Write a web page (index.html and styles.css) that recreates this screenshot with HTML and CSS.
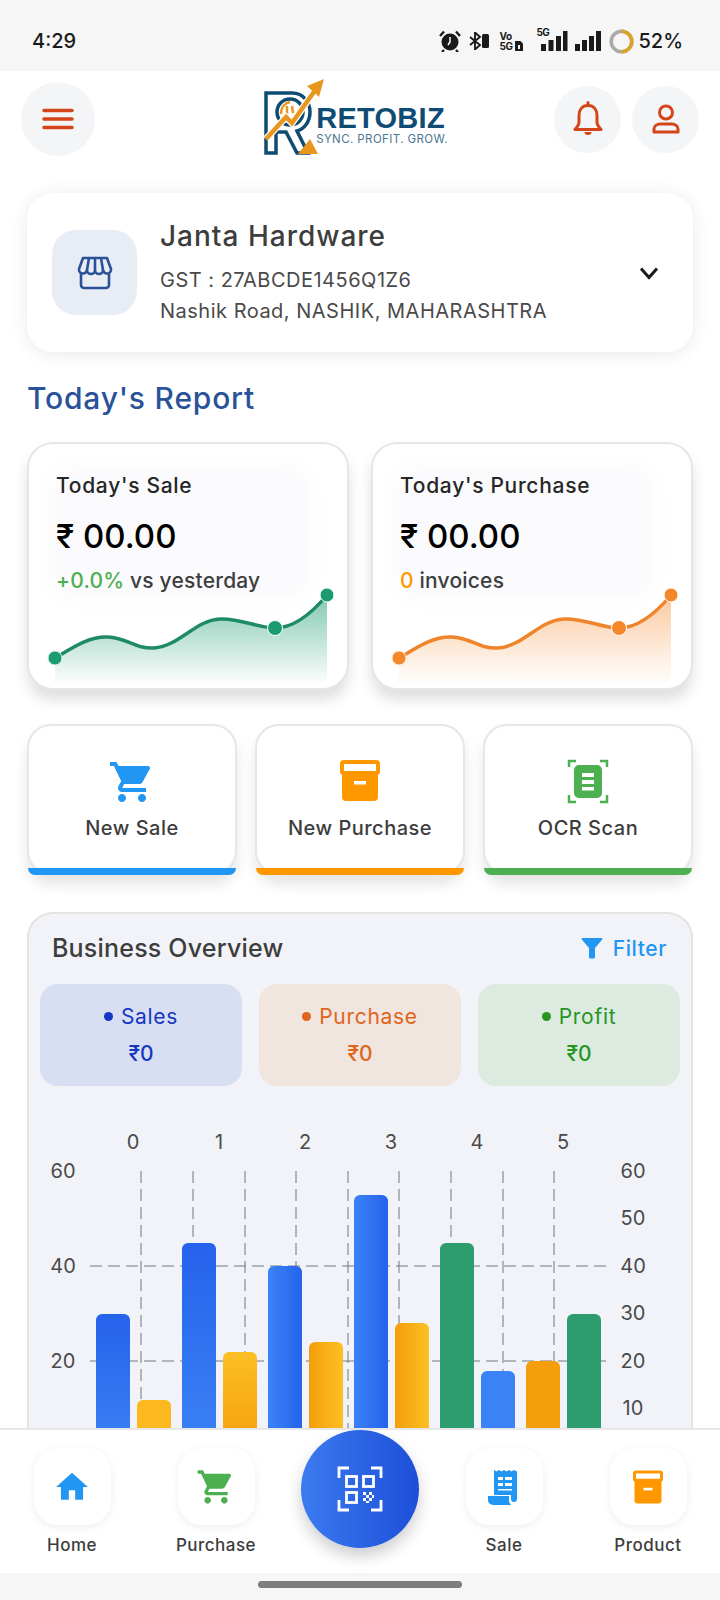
FILE: index.html
```html
<!DOCTYPE html>
<html>
<head>
    <meta charset="utf-8">
    <meta name="viewport" content="width=device-width, initial-scale=1">
    <title>Retobiz</title>
    <link rel="stylesheet" href="styles.css">
</head>
<body>
    <div class="app">
        <div class="status-bar">
            <span class="time">4:29</span>
            <div class="status-icons">
                <svg class="st-alarm" width="22" height="22" viewBox="0 0 22 22"><circle cx="11" cy="12" r="8.5" fill="#1a1a1a"/><path d="M1 6l4-4.5M21 6l-4-4.5M5 20l-2 2M17 20l2 2" stroke="#1a1a1a" stroke-width="2.4" fill="none"/><path d="M11 7v5l-2 3" stroke="#f6f6f6" stroke-width="1.5" fill="none"/></svg>
                <svg class="st-bt" width="21" height="18" viewBox="0 0 21 18"><path d="M1 5l10 8-5 4.500V.5l5 4.500-10 8" stroke="#1a1a1a" stroke-width="1.900" fill="none"/><rect x="13" y="2" width="7" height="14" rx="1.500" fill="#1a1a1a"/></svg>
                <div class="st-vo"><span>Vo</span><span>5G</span></div>
                <svg class="st-sim" width="8" height="10" viewBox="0 0 8 10"><path d="M0 0h5.500L8 2.500V10H0z" fill="#1a1a1a"/><rect x="3" y="4" width="2" height="4" fill="#f6f6f6"/></svg>
                <div class="st-signal">
                    <span class="st-5g">5G</span>
                    <svg width="27" height="20" viewBox="0 0 27 20"><path d="M0 13h5v7H0zM7.500 9h5v11h-5zM15 5h5v15h-5z" fill="#1a1a1a"/><rect x="22" y="0" width="4.500" height="20" fill="#1a1a1a"/></svg>
                </div>
                <svg class="st-bars" width="26" height="20" viewBox="0 0 26 20"><path d="M0 13h5v7H0zM7 9h5v11H7zM14 5h5v15h-5zM21 0h5v20h-5z" fill="#1a1a1a"/></svg>
                <svg class="st-ring" width="25" height="25" viewBox="0 0 25 25"><circle cx="12.500" cy="12.500" r="10.300" fill="none" stroke="#a9a9a9" stroke-width="3.500"/><path d="M12.500 2.200a10.300 10.300 0 0 1 0 20.600" fill="none" stroke="#dca326" stroke-width="3.500"/></svg>
                <span class="battery">52%</span>
            </div>
        </div>

        <div class="top-bar">
            <button class="round-btn menu-btn">
                <svg width="32" height="24" viewBox="0 0 32 24"><path d="M2 3.500h28M2 12h28M2 20.500h28" stroke="#d4451a" stroke-width="3.500" stroke-linecap="round"/></svg>
            </button>
            <div class="logo">
                <svg width="62" height="76" viewBox="0 0 62 76">
                    <path d="M2 14H28C40 14 46 24 46 33C46 43 40 50 33 52L44 74H33L22 53H12V74H2z" fill="none" stroke="#0f4c75" stroke-width="3.500"/>
                    <circle cx="26" cy="33" r="13" fill="#fff" stroke="#0f4c75" stroke-width="3.500"/>
                    <path d="M17 35C17 28 21 24 26 23M23 36V27M29 34l-1-7" stroke="#e8961e" stroke-width="2.500" fill="none"/>
                    <path d="M2 60L22 38l6 6L52 10" stroke="#fff" stroke-width="7" fill="none"/>
                    <path d="M2 60L22 38l6 6L52 10" stroke="#e8961e" stroke-width="4.500" fill="none"/>
                    <path d="M60 0L43 7l12 11z" fill="#e8961e"/>
                    <path d="M34 75L46 60l8 15z" fill="#e8961e"/>
                </svg>
                <div class="logo-text">
                    <div class="logo-name">RETOBIZ</div>
                    <div class="logo-tag">SYNC. PROFIT. GROW.</div>
                </div>
            </div>
            <div class="top-right">
                <button class="round-btn small">
                    <svg width="30" height="36" viewBox="0 0 30 36"><path d="M15 4.500c-6 0-9 4.500-9 10v7c0 2.500-2 4.500-4 7h26c-2-2.500-4-4.500-4-7v-7c0-5.500-3-10-9-10z" fill="none" stroke="#d4451a" stroke-width="3" stroke-linejoin="round"/><path d="M15 1.500v3" stroke="#d4451a" stroke-width="3" stroke-linecap="round"/><path d="M11.500 31h7a3.500 3 0 0 1-7 0z" fill="#d4451a"/></svg>
                </button>
                <button class="round-btn small">
                    <svg width="30" height="30" viewBox="0 0 30 30"><circle cx="15" cy="8.500" r="6.500" fill="none" stroke="#d4451a" stroke-width="3"/><path d="M3 28v-3c0-3 3-5 6-5h12c3 0 6 2 6 5v3z" fill="none" stroke="#d4451a" stroke-width="3" stroke-linejoin="round"/></svg>
                </button>
            </div>
        </div>

        <div class="main">
            <div class="shop-card">
                <div class="shop-icon">
                    <svg width="36" height="34" viewBox="0 0 36 34" fill="none" stroke="#2a5298" stroke-width="2.600" stroke-linejoin="round"><path d="M6 2h24l4 11a4 4 0 0 1-8 1 4 4 0 0 1-8 0 4 4 0 0 1-8 0 4 4 0 0 1-8-1z"/><path d="M12 2l-2 12M18 2v12M24 2l2 12"/><path d="M4 17v12a3 3 0 0 0 3 3h22a3 3 0 0 0 3-3V17"/></svg>
                </div>
                <div class="shop-info">
                    <div class="shop-name">Janta Hardware</div>
                    <div class="shop-line">GST : 27ABCDE1456Q1Z6</div>
                    <div class="shop-line">Nashik Road, NASHIK, MAHARASHTRA</div>
                </div>
                <svg class="chevron" width="20" height="14" viewBox="0 0 20 14"><path d="M2 2.500l8 9 8-9" fill="none" stroke="#1a1a1a" stroke-width="3"/></svg>
            </div>

            <h2 class="section-title">Today's Report</h2>

            <div class="report-grid">
                <div class="report-card">
                    <div class="report-text">
                        <div class="report-label">Today's Sale</div>
                        <div class="report-value">₹ 00.00</div>
                        <div class="report-note"><span class="up">+0.0%</span> vs yesterday</div>
                    </div>
                    <svg class="spark" width="317" height="98" viewBox="0 0 317 98">
                        <defs><linearGradient id="fillGreen" x1="0" y1="0" x2="0" y2="1"><stop offset="0" stop-color="#1b9b72" stop-opacity=".55"/><stop offset="1" stop-color="#1b9b72" stop-opacity="0"/></linearGradient></defs>
                        <path d="M25 70C45 58 60 48 78 49C98 50 105 61 124 60C150 58 165 32 190 31C210 30 228 40 245 40C265 40 282 25 297 7V97H25z" fill="url(#fillGreen)"/>
                        <path d="M25 70C45 58 60 48 78 49C98 50 105 61 124 60C150 58 165 32 190 31C210 30 228 40 245 40C265 40 282 25 297 7" fill="none" stroke="#1f8a67" stroke-width="3.500"/>
                        <circle cx="25" cy="70" r="7" fill="#1b9b72" stroke="#dff1ea" stroke-width="1"/>
                        <circle cx="245" cy="40" r="7.500" fill="#1b9b72" stroke="#fff" stroke-width="1"/>
                        <circle cx="297" cy="7" r="7" fill="#1b9b72" stroke="#fff" stroke-width="1"/>
                    </svg>
                </div>
                <div class="report-card">
                    <div class="report-text">
                        <div class="report-label">Today's Purchase</div>
                        <div class="report-value">₹ 00.00</div>
                        <div class="report-note"><span class="count">0</span> invoices</div>
                    </div>
                    <svg class="spark" width="317" height="98" viewBox="0 0 317 98">
                        <defs><linearGradient id="fillOrange" x1="0" y1="0" x2="0" y2="1"><stop offset="0" stop-color="#f5872b" stop-opacity=".45"/><stop offset="1" stop-color="#f5872b" stop-opacity="0"/></linearGradient></defs>
                        <path d="M25 70C45 58 60 48 78 49C98 50 105 61 124 60C150 58 165 32 190 31C210 30 228 40 245 40C265 40 282 25 297 7V97H25z" fill="url(#fillOrange)"/>
                        <path d="M25 70C45 58 60 48 78 49C98 50 105 61 124 60C150 58 165 32 190 31C210 30 228 40 245 40C265 40 282 25 297 7" fill="none" stroke="#f0842a" stroke-width="3.500"/>
                        <circle cx="25" cy="70" r="7" fill="#f5872b" stroke="#fdeee0" stroke-width="1"/>
                        <circle cx="245" cy="40" r="7.500" fill="#f5872b" stroke="#fff" stroke-width="1"/>
                        <circle cx="297" cy="7" r="7" fill="#f5872b" stroke="#fff" stroke-width="1"/>
                    </svg>
                </div>
            </div>

            <div class="action-grid">
                <div class="action-card bar-blue">
                    <svg width="48" height="48" viewBox="0 0 24 24" fill="#2196f3"><path d="M7 18c-1.100 0-1.990.9-1.990 2S5.900 22 7 22s2-.9 2-2-.9-2-2-2zM1 2v2h2l3.600 7.590-1.350 2.450c-.16.28-.25.61-.25.96 0 1.100.9 2 2 2h12v-2H7.420c-.14 0-.25-.11-.25-.25l.03-.12.9-1.630h7.450c.75 0 1.410-.41 1.750-1.030l3.580-6.490c.08-.14.12-.31.12-.48 0-.55-.45-1-1-1H5.210l-.94-2H1zm16 16c-1.100 0-1.990.9-1.990 2s.89 2 1.990 2 2-.9 2-2-.9-2-2-2z"/></svg>
                    <span>New Sale</span>
                </div>
                <div class="action-card bar-orange">
                    <svg width="48" height="48" viewBox="0 0 48 48"><path d="M8 2h32a4 4 0 0 1 4 4v8a3 3 0 0 1-2 2.800V39a4 4 0 0 1-4 4H10a4 4 0 0 1-4-4V16.800A3 3 0 0 1 4 14V6a4 4 0 0 1 4-4z" fill="#ff9800"/><rect x="8" y="6" width="32" height="7" fill="#fff"/><rect x="18" y="23" width="12" height="3.500" fill="#fff"/></svg>
                    <span>New Purchase</span>
                </div>
                <div class="action-card bar-green">
                    <svg width="48" height="48" viewBox="0 0 48 48"><path d="M5 9V3h7M36 3h7v6M5 37v7h7M36 44h7v-7" fill="none" stroke="#4caf50" stroke-width="2.500"/><rect x="10" y="7" width="28" height="33" rx="5" fill="#4caf50"/><path d="M18 15h12v4H18zM18 22h12v4H18zM18 29h12v3.500H18z" fill="#fff"/></svg>
                    <span>OCR Scan</span>
                </div>
            </div>

            <div class="overview">
                <div class="overview-head">
                    <span class="overview-title">Business Overview</span>
                    <span class="filter">
                        <svg width="22" height="22" viewBox="0 0 22 22"><path d="M1.500 1h19c.8 0 1.200 1 .7 1.600L14 11v9c0 .8-.6 1.500-1.500 1.500h-3C8.600 21.500 8 20.800 8 20v-9L.8 2.600C.3 2 .7 1 1.500 1z" fill="#2196f3"/></svg>
                        Filter
                    </span>
                </div>
                <div class="stat-row">
                    <div class="stat stat-sales"><div class="stat-label"><i></i>Sales</div><div class="stat-value">₹0</div></div>
                    <div class="stat stat-purchase"><div class="stat-label"><i></i>Purchase</div><div class="stat-value">₹0</div></div>
                    <div class="stat stat-profit"><div class="stat-label"><i></i>Profit</div><div class="stat-value">₹0</div></div>
                </div>
                <svg class="chart" width="660" height="345" viewBox="0 0 660 345">
                    <defs>
                        <linearGradient id="blueV" x1="0" y1="0" x2="0" y2="1"><stop offset="0" stop-color="#2563eb"/><stop offset="1" stop-color="#3b82f6"/></linearGradient>
                        <linearGradient id="blueH" x1="0" y1="0" x2="1" y2="0"><stop offset="0" stop-color="#3b82f6"/><stop offset="1" stop-color="#2563eb"/></linearGradient>
                        <linearGradient id="amberV" x1="0" y1="0" x2="0" y2="1"><stop offset="0" stop-color="#fbbf24"/><stop offset="1" stop-color="#f59e0b"/></linearGradient>
                        <linearGradient id="amberH" x1="0" y1="0" x2="1" y2="0"><stop offset="0" stop-color="#f59e0b"/><stop offset="1" stop-color="#fbbf24"/></linearGradient>
                    </defs>
                    <g class="axis">
                        <text x="103" y="49">0</text><text x="189" y="49">1</text><text x="275" y="49">2</text><text x="361" y="49">3</text><text x="447" y="49">4</text><text x="533" y="49">5</text>
                        <text x="33" y="78">60</text><text x="33" y="173">40</text><text x="33" y="268">20</text>
                        <text x="603" y="78">60</text><text x="603" y="125">50</text><text x="603" y="173">40</text><text x="603" y="220">30</text><text x="603" y="268">20</text><text x="603" y="315">10</text>
                    </g>
                    <g class="grid-lines">
                        <path d="M60 166H577M60 261H577"/>
                        <path d="M111 71V345M163 71V345M215 71V345M266 71V345M318 71V345M369 71V345M421 71V345M473 71V345M524 71V345"/>
                    </g>
                    <rect x="66" y="214" width="34" height="140" rx="6" fill="url(#blueV)"/>
                    <rect x="107" y="300" width="34" height="60" rx="6" fill="#fbb81f"/>
                    <rect x="152" y="143" width="34" height="210" rx="6" fill="url(#blueV)"/>
                    <rect x="193" y="252" width="34" height="100" rx="6" fill="url(#amberV)"/>
                    <rect x="238" y="166" width="34" height="190" rx="6" fill="url(#blueH)"/>
                    <rect x="279" y="242" width="34" height="110" rx="6" fill="url(#amberH)"/>
                    <rect x="324" y="95" width="34" height="260" rx="6" fill="url(#blueH)"/>
                    <rect x="365" y="223" width="34" height="130" rx="6" fill="url(#amberH)"/>
                    <rect x="410" y="143" width="34" height="210" rx="6" fill="#2d9d6f"/>
                    <rect x="451" y="271" width="34" height="80" rx="6" fill="#3b82f6"/>
                    <rect x="496" y="261" width="34" height="90" rx="6" fill="#f59e0b"/>
                    <rect x="537" y="214" width="34" height="140" rx="6" fill="#2d9d6f"/>
                </svg>
            </div>
        </div>

        <div class="bottom-nav">
            <div class="nav-item">
                <div class="nav-tile"><svg width="38" height="38" viewBox="0 0 24 24" fill="#2196f3"><path d="M10 20v-6h4v6h5v-8h3L12 3 2 12h3v8z"/></svg></div>
                <span>Home</span>
            </div>
            <div class="nav-item">
                <div class="nav-tile"><svg width="40" height="40" viewBox="0 0 24 24" fill="#4caf50"><path d="M7 18c-1.100 0-1.990.9-1.990 2S5.900 22 7 22s2-.9 2-2-.9-2-2-2zM1 2v2h2l3.600 7.590-1.350 2.450c-.16.28-.25.61-.25.96 0 1.100.9 2 2 2h12v-2H7.420c-.14 0-.25-.11-.25-.25l.03-.12.9-1.630h7.450c.75 0 1.410-.41 1.750-1.030l3.580-6.490c.08-.14.12-.31.12-.48 0-.55-.45-1-1-1H5.210l-.94-2H1zm16 16c-1.100 0-1.990.9-1.990 2s.89 2 1.990 2 2-.9 2-2-.9-2-2-2z"/></svg></div>
                <span>Purchase</span>
            </div>
            <div class="nav-item">
                <div class="fab">
                    <svg width="46" height="46" viewBox="0 0 46 46" fill="none" stroke="#fff" stroke-width="2.800"><path d="M2 12V2h10M34 2h10v10M2 34v10h10M34 44h10V34"/><rect x="9.500" y="10.500" width="10" height="10"/><rect x="26.500" y="10.500" width="10" height="10"/><rect x="9.500" y="26.500" width="10" height="10"/><path d="M26 26h3v3h-3zM32 26h3v3h-3zM29 29h3v3h-3zM35 29h2v3h-2zM26 32h3v3h-3zM32 32h3v3h-3zM29 35h3v2h-3z" fill="#fff" stroke="none"/></svg>
                </div>
            </div>
            <div class="nav-item">
                <div class="nav-tile"><svg width="34" height="36" viewBox="0 0 34 36"><path d="M7 1l2.500 1.500L12 1l2.500 1.500L17 1l2.500 1.500L22 1l2.500 1.500L27 1l3 1.500V30a3 3 0 0 1-6 0v-4H7z" fill="#2196f3"/><path d="M1 27h21v4c0 2 .8 3.500 2 5H6a5 5 0 0 1-5-5z" fill="#2196f3"/><path d="M11 8h5v3h-5zM18 8h7v3h-7zM11 14h5v3h-5zM18 14h7v3h-7zM11 20h14v1.500H11z" fill="#fff"/></svg></div>
                <span>Sale</span>
            </div>
            <div class="nav-item">
                <div class="nav-tile"><svg width="36" height="36" viewBox="0 0 48 48"><path d="M8 2h32a4 4 0 0 1 4 4v8a3 3 0 0 1-2 2.800V42a4 4 0 0 1-4 4H10a4 4 0 0 1-4-4V16.800A3 3 0 0 1 4 14V6a4 4 0 0 1 4-4z" fill="#ff9800"/><rect x="8" y="6" width="32" height="7" fill="#fff"/><rect x="18" y="25" width="12" height="3.500" fill="#fff"/></svg></div>
                <span>Product</span>
            </div>
        </div>

        <div class="gesture-bar"><div class="gesture-pill"></div></div>
    </div>
</body>
</html>
```

FILE: styles.css
```css
:root {
    --blue: #2196f3;
    --orange: #ff9800;
    --green: #4caf50;
    --title: #2a5298;
    --text: #3d3d3d;
}
* {
    box-sizing: border-box;
    margin: 0;
    padding: 0;
    font-family: Inter, "Noto Sans", sans-serif;
}
body {
    background: #fff;
}
.app {
    width: 720px;
    height: 1600px;
    display: flex;
    flex-direction: column;
    overflow: hidden;
}

/* status bar */
.status-bar {
    height: 71px;
    flex: none;
    background: #f6f6f6;
    display: flex;
    justify-content: space-between;
    align-items: center;
    padding: 11px 37px 0 32px;
    color: #1a1a1a;
}
.time {
    font-size: 20px;
    font-weight: 500;
}
.status-icons {
    display: flex;
    align-items: center;
}
.st-bt {
    margin-left: 8px;
}
.st-vo {
    margin-left: 10px;
    display: flex;
    flex-direction: column;
    font-size: 10px;
    line-height: 10px;
    font-weight: 700;
    letter-spacing: -0.5px;
}
.st-sim {
    margin: 10px 0 0 3px;
}
.st-signal {
    margin-left: 18px;
    position: relative;
    display: flex;
}
.st-5g {
    position: absolute;
    left: -5px;
    top: -5px;
    font-size: 10px;
    font-weight: 700;
    letter-spacing: -0.5px;
    background: #f6f6f6;
}
.st-bars {
    margin-left: 7px;
}
.st-ring {
    margin-left: 8px;
}
.battery {
    margin-left: 4px;
    font-size: 20px;
    font-weight: 500;
}

/* top bar */
.top-bar {
    flex: none;
    display: grid;
    grid-template-columns: 1fr auto 1fr;
    align-items: center;
    padding: 11px 21px 0;
}
.round-btn {
    border: none;
    border-radius: 50%;
    background: #f3f5f7;
    display: flex;
    align-items: center;
    justify-content: center;
}
.menu-btn {
    width: 74px;
    height: 74px;
}
.round-btn.small {
    width: 67px;
    height: 67px;
}
.top-right {
    justify-self: end;
    display: flex;
    gap: 11px;
}
.logo {
    display: flex;
    align-items: flex-start;
    align-self: start;
    margin: -3px 8px -3px 0;
}
.logo-text {
    margin: 25px 0 0 -10px;
}
.logo-name {
    font-family: "Liberation Sans", sans-serif;
    font-size: 29px;
    line-height: 28px;
    font-weight: 700;
    color: #0f4c75;
    letter-spacing: 0.3px;
}
.logo-tag {
    font-size: 11.5px;
    line-height: 14px;
    color: #4a7690;
    letter-spacing: 0.4px;
}

.main {
    flex: 1;
    min-height: 0;
    overflow: hidden;
    padding: 37px 27px 0;
}

/* shop card */
.shop-card {
    height: 159px;
    background: #fff;
    border-radius: 26px;
    box-shadow: 0 2px 18px rgba(0, 0, 0, 0.09);
    display: flex;
    align-items: center;
    padding: 0 34px 0 25px;
}
.shop-icon {
    width: 85px;
    height: 85px;
    flex: none;
    border-radius: 24px;
    background: #e8edf5;
    display: flex;
    align-items: center;
    justify-content: center;
}
.shop-info {
    flex: 1;
    margin-left: 23px;
}
.shop-name {
    font-size: 28px;
    line-height: 34px;
    font-weight: 500;
    letter-spacing: 1px;
    color: var(--text);
    margin-bottom: 12px;
}
.shop-line {
    font-size: 20px;
    line-height: 31px;
    letter-spacing: 0.5px;
    color: #4a4a4a;
}

.section-title {
    margin-top: 26px;
    font-size: 30px;
    line-height: 40px;
    font-weight: 500;
    letter-spacing: 0.8px;
    color: var(--title);
}

/* report cards */
.report-grid {
    margin-top: 24px;
    display: grid;
    grid-template-columns: 322px 322px;
    gap: 22px;
}
.report-card {
    position: relative;
    height: 248px;
    background: #fff;
    border: 2px solid #e6e6e6;
    border-radius: 26px;
    box-shadow: 0 10px 14px rgba(0, 0, 0, 0.13);
    overflow: hidden;
}
.report-text {
    margin: 27px 40px 0 27px;
    background: #fbfbfd;
    box-shadow: 0 0 24px 6px #fbfbfd;
    border-radius: 18px;
}
.report-label {
    font-size: 21px;
    line-height: 30px;
    font-weight: 500;
    letter-spacing: 0.7px;
    color: #262626;
}
.report-value {
    margin-top: 15px;
    font-size: 33px;
    line-height: 40px;
    font-weight: 500;
    color: #000;
}
.report-note {
    margin-top: 11px;
    font-size: 21px;
    line-height: 28px;
    font-weight: 500;
    letter-spacing: 0.2px;
    color: #3d3d3d;
}
.up {
    color: var(--green);
}
.count {
    color: var(--orange);
}
.spark {
    position: absolute;
    left: 1px;
    bottom: 2px;
}

/* quick actions */
.action-grid {
    margin-top: 34px;
    display: grid;
    grid-template-columns: repeat(3, 210px);
    gap: 18px;
}
.action-card {
    position: relative;
    height: 151px;
    background: #fff;
    border: 2px solid #e6e6e6;
    border-radius: 24px;
    box-shadow: 0 10px 14px rgba(0, 0, 0, 0.1);
    display: flex;
    flex-direction: column;
    align-items: center;
    padding-top: 32px;
    font-size: 20px;
    font-weight: 500;
    color: var(--text);
}
.action-card::after {
    content: "";
    position: absolute;
    left: -1px;
    right: -1px;
    bottom: -2px;
    height: 7px;
    border-radius: 0 0 7px 7px;
    background: var(--bar);
}
.action-card span {
    margin-top: 10px;
    letter-spacing: 0.5px;
}
.bar-blue {
    --bar: var(--blue);
}
.bar-orange {
    --bar: var(--orange);
}
.bar-green {
    --bar: var(--green);
}

/* overview panel */
.overview {
    margin-top: 37px;
    background: #f1f3f8;
    border: 2px solid #e3e3e3;
    border-radius: 26px;
    padding: 15px 11px 0;
    height: 560px;
}
.overview-head {
    height: 38px;
    display: flex;
    justify-content: space-between;
    align-items: center;
    padding: 0 13px 0 12px;
}
.overview-title {
    font-size: 25px;
    font-weight: 500;
    letter-spacing: 0.2px;
    color: var(--text);
}
.filter {
    display: flex;
    align-items: center;
    gap: 10px;
    font-size: 21px;
    font-weight: 500;
    letter-spacing: 0.6px;
    color: var(--blue);
}
.stat-row {
    margin-top: 17px;
    display: grid;
    grid-template-columns: repeat(3, 202px);
    gap: 17px;
}
.stat {
    height: 102px;
    border-radius: 18px;
    display: flex;
    flex-direction: column;
    align-items: center;
    justify-content: center;
    gap: 9px;
}
.stat-label {
    display: flex;
    align-items: center;
    gap: 8px;
    font-size: 21px;
    line-height: 28px;
    letter-spacing: 0.7px;
}
.stat-label i {
    width: 9px;
    height: 9px;
    border-radius: 50%;
    background: currentColor;
}
.stat-value {
    font-size: 21px;
    line-height: 28px;
    font-weight: 500;
}
.stat-sales {
    background: #d8dff2;
    color: #1537c4;
}
.stat-purchase {
    background: #f0e5df;
    color: #e0641a;
}
.stat-profit {
    background: #dceae0;
    color: #25961f;
}

/* chart */
.chart {
    display: block;
    margin: 14px 0 0 -10px;
}
.axis text {
    font-size: 20px;
    fill: #4a4a4a;
    text-anchor: middle;
}
.grid-lines path {
    stroke: #71787e;
    stroke-width: 1;
    stroke-dasharray: 12 6;
    fill: none;
}

/* bottom nav */
.bottom-nav {
    flex: none;
    height: 145px;
    background: #fff;
    border-top: 2px solid #e8e8e8;
    display: grid;
    grid-template-columns: repeat(5, 1fr);
}
.nav-item {
    display: flex;
    flex-direction: column;
    align-items: center;
    padding-top: 18px;
}
.nav-item span {
    margin-top: 9px;
    font-size: 17px;
    line-height: 22px;
    font-weight: 500;
    letter-spacing: 0.5px;
    color: var(--text);
}
.nav-tile {
    width: 77px;
    height: 77px;
    border-radius: 24px;
    background: #fff;
    box-shadow: 0 2px 8px rgba(0, 0, 0, 0.07);
    display: flex;
    align-items: center;
    justify-content: center;
}
.nav-item .fab {
    width: 118px;
    height: 118px;
    margin-top: -18px;
    border-radius: 50%;
    background: linear-gradient(90deg, #3b7bf0, #1d4ed8);
    box-shadow: 0 8px 16px rgba(0, 0, 0, 0.2);
    display: flex;
    align-items: center;
    justify-content: center;
}
.gesture-bar {
    flex: none;
    height: 27px;
    background: #f6f6f6;
    display: flex;
    justify-content: center;
    padding-top: 8px;
}
.gesture-pill {
    width: 204px;
    height: 7px;
    border-radius: 4px;
    background: #7d7d7d;
}
```
